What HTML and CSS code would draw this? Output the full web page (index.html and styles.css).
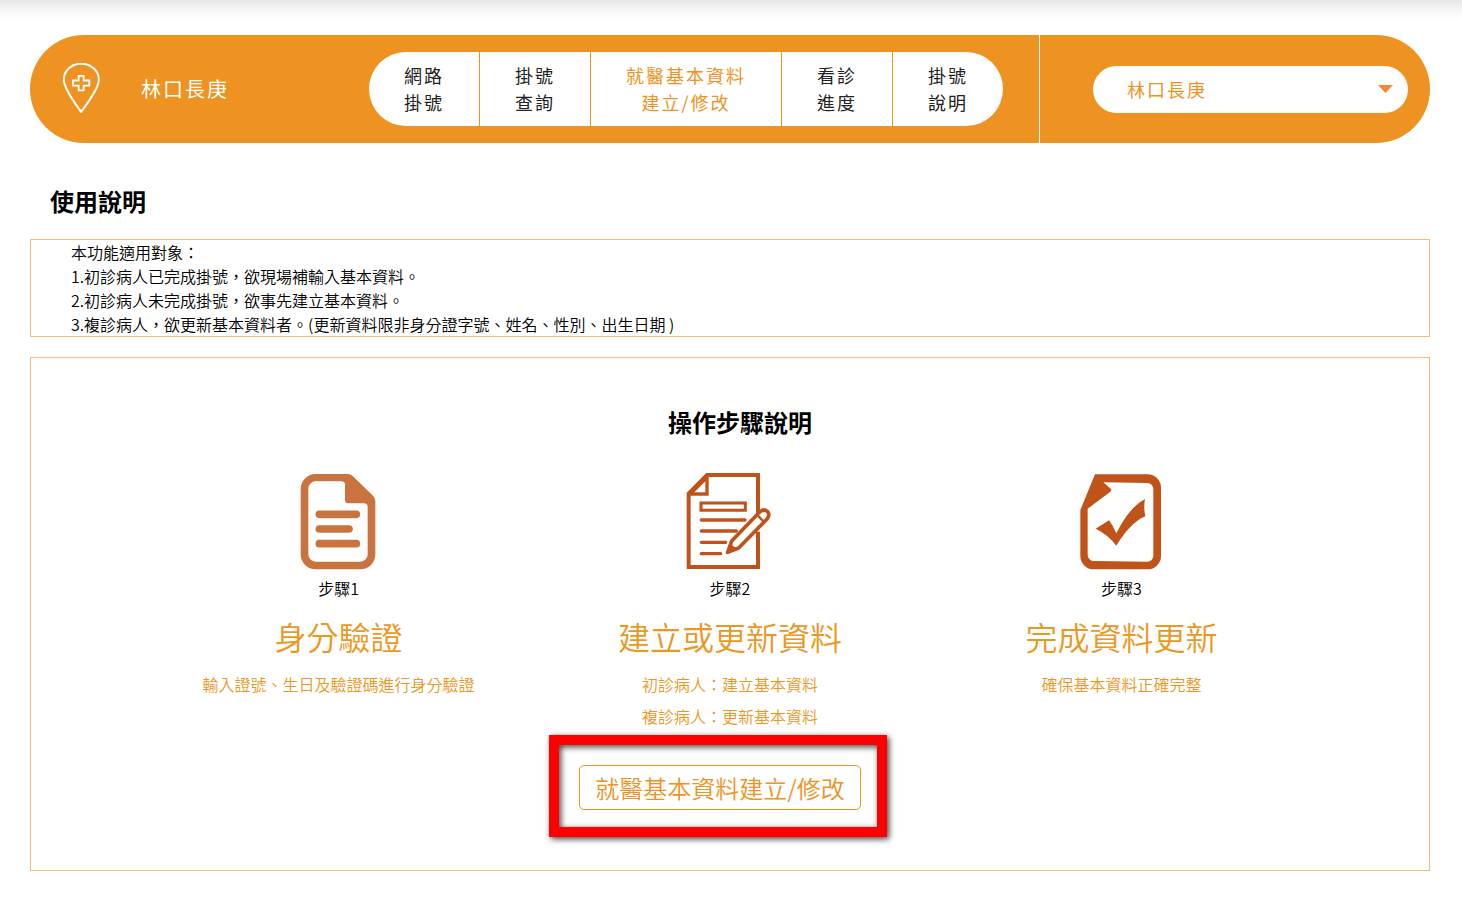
FILE: index.html
```html
<!DOCTYPE html>
<html lang="zh-Hant">
<head>
<meta charset="utf-8">
<meta name="viewport" content="width=device-width, initial-scale=1">
<title>就醫基本資料建立/修改</title>
<link rel="stylesheet" href="styles.css">
</head>
<body>
<div class="page">
  <header class="bar">
    <div class="bar-main">
      <div class="brand">
        <svg class="pin" viewBox="186 189 114 156" fill="none" stroke="#fff" aria-hidden="true">
          <path stroke-width="6" stroke-linejoin="round" d="M243.500 336C232 318 191.500 268 191.500 239C191.500 212 215 191 243.500 191S296.500 212 296.500 239C296.500 268 255 318 243.500 336Z"/>
          <path stroke-width="5.500" d="M236 227.500H251V241.500H268V257H251V271H236V257H219V241.500H236Z"/>
        </svg>
        <span class="brand-name">林口長庚</span>
      </div>
      <nav class="nav">
        <a href="#">網路<br>掛號</a>
        <a href="#">掛號<br>查詢</a>
        <a href="#" class="active">就醫基本資料<br>建立/修改</a>
        <a href="#">看診<br>進度</a>
        <a href="#">掛號<br>說明</a>
      </nav>
    </div>
    <div class="bar-side">
      <div class="picker">
        <select aria-label="院區"><option>林口長庚</option></select>
        <svg class="caret" viewBox="0 0 15 8" aria-hidden="true"><path d="M0 0H15L7.500 8Z" fill="#f58634"/></svg>
      </div>
    </div>
  </header>

  <main>
    <h2 class="heading">使用說明</h2>
    <div class="panel notes">
      <p>本功能適用對象：</p>
      <p>1.初診病人已完成掛號，欲現場補輸入基本資料。</p>
      <p>2.初診病人未完成掛號，欲事先建立基本資料。</p>
      <p>3.複診病人，欲更新基本資料者。(更新資料限非身分證字號、姓名、性別、出生日期 )</p>
    </div>

    <section class="panel guide">
      <h2 class="heading centered">操作步驟說明</h2>
      <div class="steps">
        <div class="step">
          <svg class="step-icon" viewBox="27 39 300 294" aria-hidden="true">
            <path fill="#c9733f" fill-rule="evenodd" d="M107 42H204Q212 42 218 48L279 107Q286 114 286 123V283A45 45 0 0 1 241 328H107A45 45 0 0 1 62 283V87A45 45 0 0 1 107 42ZM107 64A22 22 0 0 0 85 86V283A22 22 0 0 0 107 305H241A22 22 0 0 0 263 283V141Q263 130 252 130H206Q195 130 195 119V75Q195 64 184 64Z"/>
            <path stroke="#c9733f" stroke-width="23" stroke-linecap="round" d="M118 163H229M118 207H207M118 251H229"/>
          </svg>
          <p class="step-no">步驟1</p>
          <h3>身分驗證</h3>
          <p class="step-text">輸入證號、生日及驗證碼進行身分驗證</p>
        </div>
        <div class="step">
          <svg class="step-icon" viewBox="31 39 300 294" fill="none" stroke="#c0531a" aria-hidden="true">
            <path stroke-width="12" d="M265 160V45H112L57 101V321H265V215"/>
            <path stroke-width="10" d="M112 45V102H57"/>
            <path stroke-width="9" d="M112 52L66 99"/>
            <path stroke-width="9" d="M94 129H227V151H94Z"/>
            <path stroke-width="10" stroke-linecap="round" d="M95 180H226M95 213H200M95 247H168M95 281H153"/>
            <path fill="#fff" stroke-width="11" stroke-linejoin="round" d="M174 277L186 243L270 156Q282 145 293 154Q302 163 293 176L207 264Z"/>
            <path stroke-width="7" d="M261 163L282 185"/>
            <path fill="#c0531a" stroke="none" d="M168 282L182 243L190 258L206 266Z"/>
          </svg>
          <p class="step-no">步驟2</p>
          <h3>建立或更新資料</h3>
          <p class="step-text">初診病人：建立基本資料<br>複診病人：更新基本資料</p>
        </div>
        <div class="step">
          <svg class="step-icon" viewBox="33 39 300 294" fill="#c0531a" aria-hidden="true">
            <path fill-rule="evenodd" d="M105 43H263A40 40 0 0 1 303 83V288A40 40 0 0 1 263 328H101A40 40 0 0 1 61 288V150ZM130 67L152 86Q156 90 151 95L83 146V284A19 19 0 0 0 102 303L262 305A18 18 0 0 0 280 287V87A18 18 0 0 0 262 69Z"/>
            <path d="M107 206L147 181Q160 198 169 220C190 177 219 136 255 117Q250 142 256 169C222 183 192 220 169 257Q144 224 107 206Z"/>
          </svg>
          <p class="step-no">步驟3</p>
          <h3>完成資料更新</h3>
          <p class="step-text">確保基本資料正確完整</p>
        </div>
      </div>
      <div class="action">
        <div class="marked">
          <button type="button" class="go">就醫基本資料建立/修改</button>
          <span class="frame"></span>
        </div>
      </div>
    </section>
  </main>
</div>
</body>
</html>
```
FILE: styles.css
```css
* { box-sizing: border-box; }

body {
  margin: 0;
  background: #fff linear-gradient(#e5e5e5, #f3f3f3 7px, #fff 20px) no-repeat 0 0 / 100% 20px;
  color: #000;
  font: 350 16px/24px "Noto Sans CJK TC", sans-serif;
}

p, h2, h3 { margin: 0; }

.page { padding: 35px 32px 28px 30px; }

.bar {
  display: grid;
  grid-template-columns: 1fr 391px;
  min-height: 108px;
  border-radius: 54px;
  background: #ee9321;
  font-weight: 400;
  letter-spacing: 2px;
}

.bar-main {
  display: flex;
  align-items: center;
  justify-content: space-between;
  padding: 0 36px 0 32px;
}

.brand { display: flex; align-items: center; gap: 41px; color: #fff; font-size: 20px; }
.pin { width: 38px; height: 52px; }

.nav { display: flex; gap: 1px; border-radius: 37px; overflow: hidden; }
.nav a {
  padding: 10px 35px;
  background: #fff;
  color: #222;
  font-size: 18px;
  line-height: 27px;
  text-align: center;
  text-decoration: none;
}
.nav .active { color: #ee9321; }

.bar-side {
  display: flex;
  align-items: center;
  padding: 0 22px 0 53px;
  border-left: 1px solid #fff;
}

.picker { position: relative; flex: 1; }
.picker select {
  display: block;
  width: 100%;
  height: 47px;
  padding: 0 34px;
  border: 0;
  border-radius: 24px;
  background: #fff;
  appearance: none;
  color: #ee9321;
  font: inherit;
  font-size: 18px;
  letter-spacing: inherit;
}
.caret { position: absolute; top: 19px; right: 15px; width: 15px; height: 8px; pointer-events: none; }

.heading { padding-left: 20px; font-size: 24px; line-height: 36px; font-weight: 700; }
main > .heading { margin: 40px 0 20px; }
.centered { text-align: center; }

.panel { border: 1px solid #f4bc76; }
.notes { padding: 0 40px; }

.guide { margin-top: 20px; padding: 46px 0 60px; }

.steps {
  display: grid;
  grid-template-columns: repeat(3, 1fr);
  width: 84%;
  margin: 33px auto 0;
  text-align: center;
}
.step-icon { display: block; width: 100px; height: 98px; margin: 0 auto 5px; }
.step h3 {
  margin: 12px 0 8px;
  color: #eb981f;
  font-size: 32px;
  line-height: 48px;
  font-weight: 350;
}
.step-text { color: #eb981f; line-height: 32px; }

.action { display: flex; justify-content: center; margin-top: 33px; padding-right: 20px; }
.marked { position: relative; }
.go {
  display: block;
  height: 45px;
  padding: 0 15px;
  border: 1px solid #ee9321;
  border-radius: 5px;
  background: #fff;
  color: #ee9321;
  font: inherit;
  font-size: 24px;
}
.frame {
  position: absolute;
  inset: -30px -26px -27px -30px;
  border: 10px solid #f00;
  box-shadow: 2px 2px 6px rgba(0, 0, 0, .75), inset 2px 2px 6px rgba(0, 0, 0, .75);
  pointer-events: none;
}
```
